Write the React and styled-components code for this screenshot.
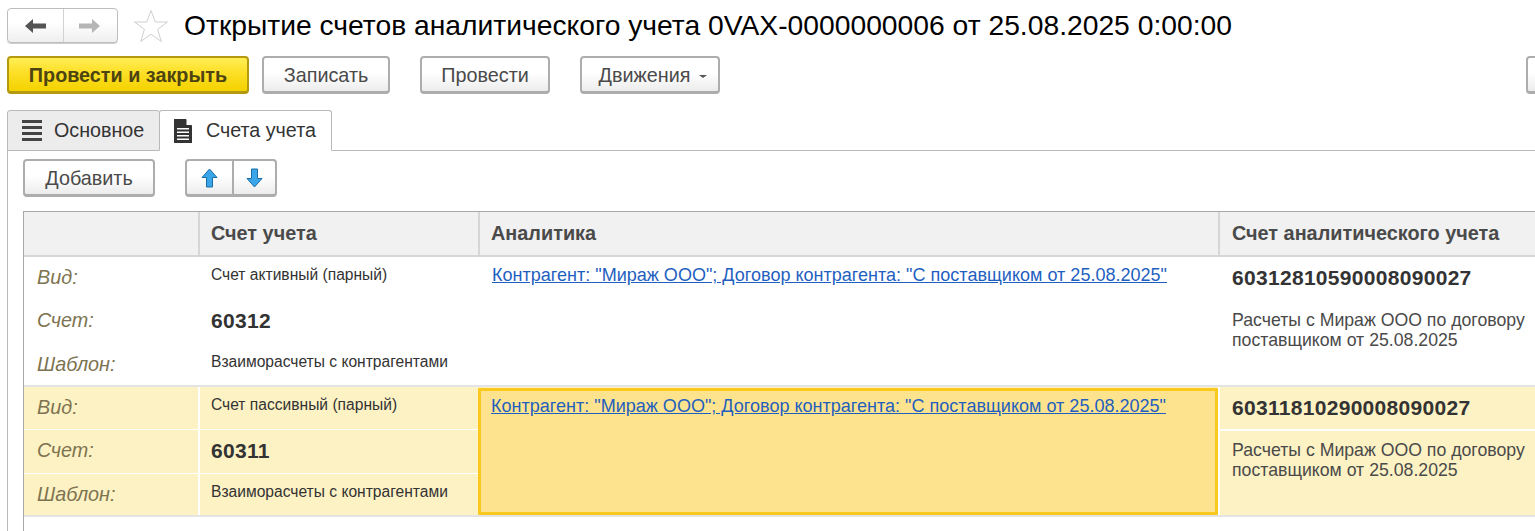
import React from "react";
import styled, { createGlobalStyle, css } from "styled-components";

const Global = createGlobalStyle`
  html, body { margin: 0; padding: 0; background: #fff; }
  body { font-family: "Liberation Sans", Arial, sans-serif; overflow: hidden; width: 1535px; height: 531px; }
`;

const Page = styled.div`
  width: 1535px;
  height: 531px;
  overflow: hidden;
  display: flex;
  flex-direction: column;
  padding: 8px 0 0 7px;
  box-sizing: border-box;
`;

const TitleRow = styled.div`
  display: flex;
  align-items: center;
  height: 35px;
`;

const NavGroup = styled.div`
  display: flex;
  width: 111px;
  height: 35px;
  box-sizing: border-box;
  border: 1px solid #bdbdbd;
  border-radius: 4px;
  background: linear-gradient(#ffffff 40%, #efefef);
  box-shadow: 0 1px 0 #cfcfcf;
`;

const NavPart = styled.div`
  display: flex;
  align-items: center;
  justify-content: center;
  &:first-child { width: 55px; flex: none; }
  & + & { flex: 1; border-left: 1px solid #d2d2d2; padding-right: 4px; }
`;

const StarWrap = styled.div`
  width: 36px;
  height: 34px;
  margin-left: 15px;
`;

const Title = styled.h1`
  margin: 0 0 0 15px;
  font-weight: 400;
  font-size: 28.25px;
  line-height: 35px;
  color: #000;
  white-space: nowrap;
`;

const CommandBar = styled.div`
  display: flex;
  align-items: flex-start;
  height: 38px;
  margin-top: 13px;
  position: relative;
`;

const CmdButton = styled.button`
  width: ${(p) => p.$w}px;
  height: 38px;
  margin-left: ${(p) => p.$ml || 0}px;
  flex: none;
  padding: 2px 0 0 ${(p) => p.$pl || 0}px;
  box-sizing: border-box;
  font-family: inherit;
  font-size: 19.8px;
  color: #4a4a4a;
  border: 2px solid #adadad;
  border-bottom-width: 3px;
  border-radius: 4px;
  background: linear-gradient(#ffffff 45%, #ececec);
  display: flex;
  align-items: center;
  justify-content: center;
  gap: 9px;
  ${(p) =>
    p.$primary &&
    css`
      font-weight: 700;
      color: #4d4412;
      border-color: #b59a10;
      background: linear-gradient(#ffee55 0%, #fde02a 40%, #f4d200 100%);
    `}
`;

const Caret = styled.span`
  width: 0;
  height: 0;
  border-left: 4px solid transparent;
  border-right: 4px solid transparent;
  border-top: 3.5px solid #555;
  margin-top: 2px;
`;

const Tabs = styled.div`
  display: flex;
  align-items: flex-end;
  height: 41px;
  margin-top: 16px;
  position: relative;
  z-index: 1;
`;

const Tab = styled.div`
  height: 41px;
  width: ${(p) => p.$w}px;
  box-sizing: border-box;
  display: flex;
  align-items: center;
  gap: ${(p) => (p.$active ? 13 : 12)}px;
  padding-left: ${(p) => p.$pl}px;
  font-size: 19.7px;
  color: #333;
  border: 1px solid #b9b9b9;
  border-radius: 3px 3px 0 0;
  background: ${(p) => (p.$active ? "#fff" : "#ececec")};
  ${(p) => (p.$active ? "border-bottom-color:#fff;margin-left:-1px;" : "")}
`;

const Panel = styled.div`
  flex: 1;
  margin-top: -1px;
  border-top: 1px solid #b9b9b9;
  border-left: 1px solid #b9b9b9;
  padding: 8px 0 0 15px;
  min-height: 0;
  display: flex;
  flex-direction: column;
`;

const PanelBar = styled.div`
  display: flex;
  height: 38px;
`;

const ArrowGroup = styled.div`
  display: flex;
  width: 92px;
  height: 38px;
  margin-left: 30px;
  box-sizing: border-box;
  border: 2px solid #adadad;
  border-bottom-width: 3px;
  border-radius: 4px;
  background: linear-gradient(#ffffff 45%, #ececec);
`;

const ArrowPart = styled.div`
  display: flex;
  align-items: center;
  justify-content: center;
  &:first-child { width: 45px; flex: none; }
  & + & { flex: 1; border-left: 2px solid #adadad; }
`;

const Table = styled.div`
  margin-top: 14px;
  flex: 1;
  min-height: 0;
  width: 1600px;
  border-top: 1px solid #a8a8a8;
  border-left: 1px solid #a8a8a8;
  display: flex;
  flex-direction: column;
  box-sizing: border-box;
`;

const columns = "174px 280px 740px 1fr";

const Header = styled.div`
  display: grid;
  grid-template-columns: ${columns};
  height: 43px;
  background: #f1f1f1;
  border-bottom: 2px solid #d6d6d6;
`;

const HeadCell = styled.div`
  padding-left: ${(p) => p.$pl || 12}px;
  display: flex;
  align-items: center;
  font-size: 19.85px;
  font-weight: 700;
  color: #4a4a4a;
  border-left: 1px solid #d6d6d6;
  border-left-width: ${(p) => (p.$first ? 0 : 2)}px;
  box-sizing: border-box;
`;

const Row = styled.div`
  display: grid;
  grid-template-columns: ${columns};
  height: 130px;
  box-sizing: border-box;
  border-bottom: 2px solid #e4e4e4;
  background: ${(p) => (p.$sel ? "#fdf2c4" : "#fff")};
`;

const Stack = styled.div`
  display: grid;
  grid-template-rows: 43px 44px 1fr;
  ${(p) => p.$line && "border-left: 2px solid " + p.$line + ";"}
`;

const Sub = styled.div`
  display: flex;
  align-items: ${(p) => (p.$top ? "flex-start" : "center")};
  box-sizing: border-box;
  padding-left: ${(p) => p.$pl || 12}px;
  padding-bottom: ${(p) => p.$pb || 0}px;
  ${(p) => p.$top && `padding-top: ${p.$top}px;`}
  ${(p) => p.$line && `border-bottom: 1px solid ${p.$line};`}
`;

const Label = styled.span`
  font-size: 19.8px;
  font-style: italic;
  color: #7d7350;
`;

const Small = styled.span`
  font-size: 15.6px;
  color: #333;
`;

const Code = styled.span`
  font-size: 21px;
  font-weight: 700;
  color: #333;
  letter-spacing: 0.3px;
`;

const LinkCell = styled.div`
  box-sizing: border-box;
  padding: 8px 0 0 12px;
  ${(p) =>
    p.$sel
      ? css`
          margin-top: 1px;
          padding: 5px 0 0 10px;
          background: #fee38e;
          border: 3px solid #fbc91e;
          border-radius: 1px;
        `
      : css`border-left: 2px solid #fff;`}
`;

const LinkText = styled.a`
  font-size: 18.05px;
  color: #1f5fbf;
  text-decoration: underline;
  white-space: nowrap;
`;

const AnCell = styled.div`
  display: flex;
  flex-direction: column;
  ${(p) => p.$line && "border-left: 2px solid " + p.$line + ";"}
`;

const AnCode = styled.div`
  height: 44px;
  box-sizing: border-box;
  padding: 0 0 ${(p) => (p.$line ? 0 : 2)}px 12px;
  display: flex;
  align-items: center;
  ${(p) => p.$line && `border-bottom: 2px solid ${p.$line};`}
`;

const AnDesc = styled.div`
  padding: 9px 0 0 12px;
  font-size: 17.7px;
  line-height: 20px;
  color: #4a4a4a;
  white-space: pre-line;
`;

const ArrowLeft = ({ c }) => (
  <svg width="22" height="16" viewBox="0 0 22 16"><path d="M0 8 8 1v4.5h13v5H8V15z" fill={c} /></svg>
);
const ArrowRight = ({ c }) => (
  <svg width="22" height="16" viewBox="0 0 22 16"><path d="M22 8 14 1v4.5H1v5h13V15z" fill={c} /></svg>
);
const Star = () => (
  <svg width="36" height="34" viewBox="0 0 36 34">
    <path d="M18 1.5 22.3 13H34.5L24.6 20.4 28.3 32.5 18 25.2 7.7 32.5 11.4 20.4 1.5 13H13.7z" fill="#fff" stroke="#cfcfcf" strokeWidth="1" />
  </svg>
);
const Lines = () => (
  <svg width="20" height="21" viewBox="0 0 20 21" fill="#444">
    <rect y="0" width="20" height="3" /><rect y="6" width="20" height="3" /><rect y="12" width="20" height="3" /><rect y="18" width="20" height="3" />
  </svg>
);
const Doc = () => (
  <svg width="19" height="24" viewBox="0 0 19 24">
    <path d="M0 0h12l6 6.5V24H0z" fill="#333" />
    <path d="M12.5 0v6h5.5z" fill="#fff" />
    <path d="M3 9h12v1.6H3zM3 12.5h12v1.6H3zM3 16h12v1.6H3zM3 19.5h12v1.6H3z" fill="#fff" />
  </svg>
);
const BlueUp = () => (
  <svg width="17" height="20" viewBox="0 0 17 20">
    <path d="M8.5 1 16 9.5h-4.5V19h-6V9.5H1z" fill="#3ba5ea" stroke="#1a6ea8" strokeWidth="1" strokeLinejoin="round" />
  </svg>
);
const BlueDown = () => (
  <svg width="17" height="20" viewBox="0 0 17 20">
    <path d="M8.5 19 16 10.5h-4.5V1h-6v9.5H1z" fill="#3ba5ea" stroke="#1a6ea8" strokeWidth="1" strokeLinejoin="round" />
  </svg>
);

const LINK = 'Контрагент: "Мираж ООО"; Договор контрагента: "С поставщиком от 25.08.2025"';
const rows = [
  { kind: "Счет активный (парный)", acc: "60312", an: "60312810590008090027" },
  { kind: "Счет пассивный (парный)", acc: "60311", an: "60311810290008090027", sel: true },
];

export default function App() {
  return (
    <Page>
      <Global />
      <TitleRow>
        <NavGroup>
          <NavPart><ArrowLeft c="#555" /></NavPart>
          <NavPart><ArrowRight c="#b5b5b5" /></NavPart>
        </NavGroup>
        <StarWrap><Star /></StarWrap>
        <Title>Открытие счетов аналитического учета 0VAX-0000000006 от 25.08.2025 0:00:00</Title>
      </TitleRow>
      <CommandBar>
        <CmdButton $primary $w={242}>Провести и закрыть</CmdButton>
        <CmdButton $w={128} $ml={13}>Записать</CmdButton>
        <CmdButton $w={130} $ml={30}>Провести</CmdButton>
        <CmdButton $w={140} $ml={30} $pl={6}>Движения<Caret /></CmdButton>
        <CmdButton $w={40} $ml={806} />
      </CommandBar>
      <Tabs>
        <Tab $w={153} $pl={14}><Lines />Основное</Tab>
        <Tab $w={173} $pl={14} $active><Doc />Счета учета</Tab>
      </Tabs>
      <Panel>
        <PanelBar>
          <CmdButton $w={132}>Добавить</CmdButton>
          <ArrowGroup>
            <ArrowPart><BlueUp /></ArrowPart>
            <ArrowPart><BlueDown /></ArrowPart>
          </ArrowGroup>
        </PanelBar>
        <Table>
          <Header>
            <HeadCell $first />
            <HeadCell $pl={11}>Счет учета</HeadCell>
            <HeadCell $pl={11}>Аналитика</HeadCell>
            <HeadCell>Счет аналитического учета</HeadCell>
          </Header>
          {rows.map((r) => {
            const line = r.sel ? "#fff" : null;
            return (
              <Row key={r.acc} $sel={r.sel}>
                <Stack>
                  <Sub $line={line} $pl={13} $pb={2}><Label>Вид:</Label></Sub>
                  <Sub $line={line} $pl={13} $pb={3}><Label>Счет:</Label></Sub>
                  <Sub $pl={13}><Label>Шаблон:</Label></Sub>
                </Stack>
                <Stack $line="#fff">
                  <Sub $line={line} $top={9} $pl={11}><Small>{r.kind}</Small></Sub>
                  <Sub $line={line} $pl={11} $pb={2}><Code>{r.acc}</Code></Sub>
                  <Sub $pl={11} $pb={6}><Small>Взаиморасчеты с контрагентами</Small></Sub>
                </Stack>
                <LinkCell $sel={r.sel}><LinkText>{LINK}</LinkText></LinkCell>
                <AnCell $line="#fff">
                  <AnCode $line={line}><Code>{r.an}</Code></AnCode>
                  <AnDesc>{"Расчеты с Мираж ООО по договору\nпоставщиком от 25.08.2025"}</AnDesc>
                </AnCell>
              </Row>
            );
          })}
        </Table>
      </Panel>
    </Page>
  );
}
